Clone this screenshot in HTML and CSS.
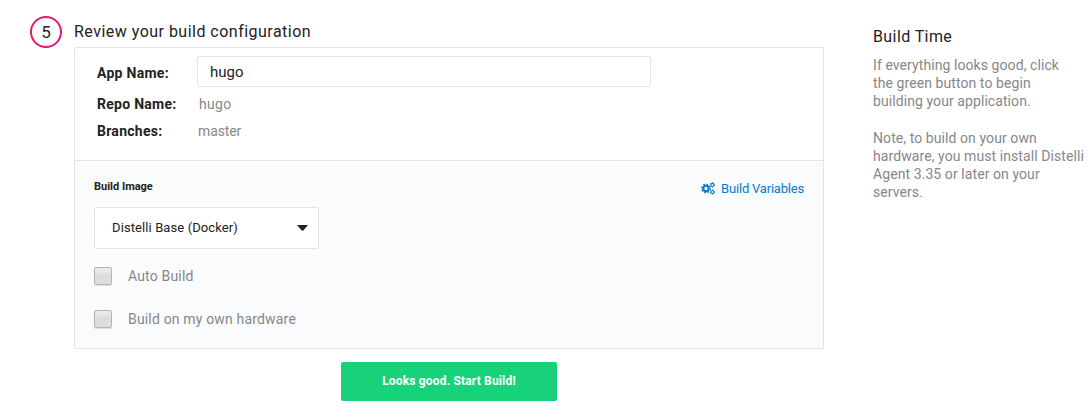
FILE: index.html
```
<!DOCTYPE html>
<html lang="en">
<head>
<meta charset="utf-8">
<title>Build configuration</title>
<link rel="stylesheet" href="styles.css">
</head>
<body>
<div class="page">
  <div class="step-number">5</div>
  <main class="step">
    <h2 class="step-title"><span>Review your build configuration</span></h2>
    <section class="card">
      <div class="details">
        <div class="row row-app"><label class="label l-app" for="app">App Name:</label><input class="app-input" id="app" type="text" value="hugo"></div>
        <div class="row row-repo"><span class="label l-repo">Repo Name:</span><span class="value v-hugo">hugo</span></div>
        <div class="row row-branch"><span class="label l-branch">Branches:</span><span class="value v-master">master</span></div>
      </div>
      <div class="options">
        <div class="options-head">
          <span class="image-label">Build Image</span>
          <a class="variables">
            <svg class="gears" viewBox="0 0 14 13" width="14" height="13">
              <g fill="none" stroke="currentColor">
                <circle cx="5" cy="6.5" r="2.7" stroke-width="2"/>
                <circle cx="5" cy="6.5" r="4.2" stroke-width="1.4" stroke-dasharray="1.65 1.65"/>
                <circle cx="11.4" cy="2.9" r="1.5" stroke-width="1.1"/>
                <circle cx="11.4" cy="2.9" r="2.3" stroke-width=".8" stroke-dasharray="1.2 1.2"/>
                <circle cx="11.4" cy="10" r="1.5" stroke-width="1.1"/>
                <circle cx="11.4" cy="10" r="2.3" stroke-width=".8" stroke-dasharray="1.2 1.2"/>
              </g>
            </svg>
            <span>Build Variables</span>
          </a>
        </div>
        <div class="select"><span>Distelli Base (Docker)</span><svg class="caret" viewBox="0 0 11 6" width="11" height="6"><path d="M0 0h11L6.5 5.3q-1 1-2 0z" fill="currentColor"/></svg></div>
        <div class="check"><span class="box"></span><span class="c-auto">Auto Build</span></div>
        <div class="check"><span class="box"></span><span class="c-own">Build on my own hardware</span></div>
      </div>
    </section>
    <button class="start" type="button">Looks good. Start Build!</button>
  </main>
  <aside class="help">
    <h3 class="help-title">Build Time</h3>
    <p class="help-text">If everything looks good, click<br>the green button to begin<br>building your application.</p>
    <p class="help-text">Note, to build on your own<br>hardware, you must install Distelli<br>Agent 3.35 or later on your<br>servers.</p>
  </aside>
</div>
</body>
</html>
```
FILE: styles.css
```
* { box-sizing: border-box; }
body { margin: 0; background: #fff; color: #222; font-family: Roboto, "Liberation Sans", sans-serif; }
.page { display: flex; height: 418px; padding: 16px 0 0 30px; overflow: hidden; }
.step-number { width: 32px; height: 32px; margin-right: 12px; border: 2px solid #e01a6b; border-radius: 50%; font-size: 17px; line-height: 28px; text-align: center; }
.step { width: 750px; margin-right: 48px; display: flex; flex-direction: column; }
.step-title { margin: 0; height: 31px; font-size: 16px; font-weight: 400; line-height: 31px; letter-spacing: .48px; }
.card { height: 302px; border: 1px solid #e2e4e5; border-radius: 2px; }
.details { height: 113px; padding: 8px 22px 0; border-bottom: 1px solid #e2e4e5; }
.row { display: flex; align-items: center; height: 27px; }
.row-app { height: 31px; margin-bottom: 3px; }
.l-app { padding-top: 2px; }
.label { width: 100px; font-size: 14px; font-weight: 700; letter-spacing: .27px; }
.app-input { width: 454px; height: 31px; padding: 0 12px; border: 1px solid #e2e4e5; border-radius: 2px; outline: 0; font: 15px Roboto, sans-serif; color: #222; }
.value { font-size: 14px; letter-spacing: .1px; color: #858789; }
.v-hugo { padding-left: 2px; letter-spacing: .3px; }
.v-master { padding-left: 1px; letter-spacing: -.1px; }
.options { height: 187px; padding: 17px 19px 0; background: #fafbfd; }
.options-head { display: flex; justify-content: space-between; height: 29px; }
.image-label { font-size: 11px; font-weight: 700; line-height: 18px; }
.variables { display: flex; align-items: center; height: 20px; color: #0a78c8; font-size: 13px; letter-spacing: -.2px; }
.gears { margin-right: 6px; }
.select { display: flex; align-items: center; justify-content: space-between; width: 225px; height: 42px; margin-bottom: 18px; padding: 0 10px 1px 17px; border: 1px solid #e2e4e5; border-radius: 2px; background: #fff; font-size: 13px; letter-spacing: .1px; }
.check { display: flex; align-items: center; height: 18px; margin-bottom: 25px; color: #858789; font-size: 14px; letter-spacing: .17px; }
.box { width: 18px; height: 18px; margin-right: 16px; border: 1px solid #b4b4b4; border-radius: 2px; background: linear-gradient(#e9e9e9 0 20%, #dcdcdc 45%, #dedede); box-shadow: 0 1px 1px rgba(0,0,0,.12); }
.start { align-self: center; width: 216px; height: 39px; margin-top: 13px; padding: 0 0 2px; border: 0; border-radius: 2px; background: #17d279; color: #fff; font: 700 12px Roboto, sans-serif; letter-spacing: .17px; }
.help { padding: 11px 0 0 1px; }
.help-title { margin: 0 0 9px; font-size: 16px; font-weight: 400; line-height: 20px; letter-spacing: .4px; }
.help-text { margin: 0 0 19px; color: #858789; font-size: 14px; line-height: 18px; letter-spacing: .08px; white-space: nowrap; }
```
